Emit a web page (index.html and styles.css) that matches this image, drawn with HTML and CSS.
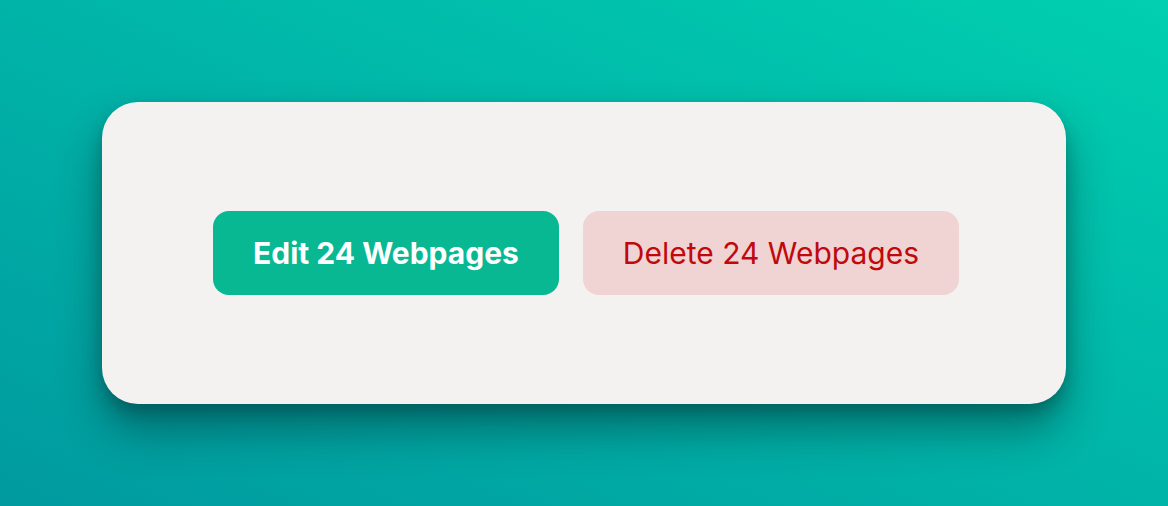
FILE: index.html
```html
<!DOCTYPE html>
<html lang="en">
<head>
<meta charset="utf-8">
<title>Bulk actions</title>
<link rel="stylesheet" href="styles.css">
</head>
<body>
<main class="stage">
  <section class="card">
    <div class="actions">
      <button class="btn btn-edit" type="button">Edit 24 Webpages</button>
      <button class="btn btn-delete" type="button">Delete 24 Webpages</button>
    </div>
  </section>
</main>
</body>
</html>
```

FILE: styles.css
```css
html, body {
  margin: 0;
  padding: 0;
  width: 1168px;
  height: 506px;
  overflow: hidden;
}

body {
  background: linear-gradient(to top right, #009a9f 0%, #00b4a8 50%, #00cfb0 100%);
  font-family: Inter, "Noto Sans", sans-serif;
}

.stage {
  height: 506px;
  display: flex;
  align-items: flex-start;
  justify-content: center;
  padding-top: 102px;
  box-sizing: border-box;
}

.card {
  width: 964px;
  height: 302px;
  background: #f3f2f1;
  border-radius: 36px;
  box-shadow: 0 26px 44px rgba(0, 40, 45, 0.45), 0 8px 14px rgba(0, 40, 45, 0.25);
  display: flex;
  align-items: center;
  justify-content: center;
}

.actions {
  display: flex;
  gap: 24px;
  margin-left: 4px;
}

.btn {
  height: 84px;
  border: 0;
  border-radius: 16px;
  padding: 0 40px;
  font-family: Inter, "Noto Sans", sans-serif;
  font-size: 30px;
  letter-spacing: 0;
  cursor: pointer;
}

.btn-edit {
  background: #08b893;
  color: #ffffff;
  font-weight: 700;
}

.btn-delete {
  background: #f0d3d3;
  color: #c0090c;
  font-weight: 400;
}
```
